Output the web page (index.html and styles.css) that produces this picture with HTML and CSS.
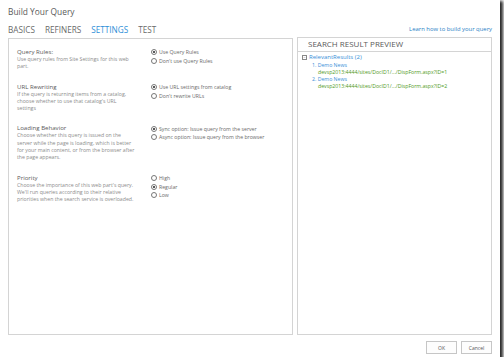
FILE: index.html
```html
<!DOCTYPE html>
<html>
<head>
  <title>Build Your Query</title>
  <link rel="stylesheet" href="styles.css">
</head>
<body>
<div class="dialog">
  <div class="dialog-title">Build Your Query</div>
  <div class="tab-row">
    <div class="tabs">
      <span class="tab">BASICS</span>
      <span class="tab">REFINERS</span>
      <span class="tab active">SETTINGS</span>
      <span class="tab">TEST</span>
    </div>
    <a class="help-link" href="#">Learn how to build your query</a>
  </div>

  <div class="panels">
    <div class="settings-panel">
      <div class="setting">
        <div class="setting-info">
          <div class="setting-name">Query Rules:</div>
          <div class="setting-desc">Use query rules from Site Settings for this web part.</div>
        </div>
        <div class="options">
          <div class="option"><span class="radio checked"></span>Use Query Rules</div>
          <div class="option"><span class="radio"></span>Don't use Query Rules</div>
        </div>
      </div>

      <div class="setting">
        <div class="setting-info">
          <div class="setting-name">URL Rewriting</div>
          <div class="setting-desc">If the query is returning items from a catalog, choose whether to use that catalog's URL settings</div>
        </div>
        <div class="options">
          <div class="option"><span class="radio checked"></span>Use URL settings from catalog</div>
          <div class="option"><span class="radio"></span>Don't rewrite URLs</div>
        </div>
      </div>

      <div class="setting">
        <div class="setting-info">
          <div class="setting-name">Loading Behavior</div>
          <div class="setting-desc">Choose whether this query is issued on the server while the page is loading, which is better for your main content, or from the browser after the page appears.</div>
        </div>
        <div class="options">
          <div class="option"><span class="radio checked"></span>Sync option: Issue query from the server</div>
          <div class="option"><span class="radio"></span>Async option: Issue query from the browser</div>
        </div>
      </div>

      <div class="setting">
        <div class="setting-info">
          <div class="setting-name">Priority</div>
          <div class="setting-desc">Choose the importance of this web part's query. We'll run queries according to their relative priorities when the search service is overloaded.</div>
        </div>
        <div class="options">
          <div class="option"><span class="radio"></span>High</div>
          <div class="option"><span class="radio checked"></span>Regular</div>
          <div class="option"><span class="radio"></span>Low</div>
        </div>
      </div>
    </div>

    <div class="preview-panel">
      <div class="preview-header">SEARCH RESULT PREVIEW</div>
      <div class="preview-body">
        <div class="tree-root"><span class="toggle">&minus;</span>RelevantResults (2)</div>
        <div class="result">
          <div class="result-title">1. Demo News</div>
          <div class="result-url">devsp2013:4444/sites/DocID1/.../DispForm.aspx?ID=1</div>
        </div>
        <div class="result">
          <div class="result-title">2. Demo News</div>
          <div class="result-url">devsp2013:4444/sites/DocID1/.../DispForm.aspx?ID=2</div>
        </div>
      </div>
    </div>
  </div>

  <div class="buttons">
    <button class="dlg-button">OK</button>
    <button class="dlg-button">Cancel</button>
  </div>
</div>
</body>
</html>
```

FILE: styles.css
```css
body {
  margin: 0;
  background-color: #ffffff;
  font-family: "Open Sans", Lato, sans-serif;
  color: #444;
}
.dialog {
  width: 500px;
  height: 357px;
  background-color: #ffffff;
  box-shadow: 2px 2px 3px 1px rgba(0, 0, 0, 0.85);
  box-sizing: border-box;
  padding: 0 8px 0 8px;
}
.dialog-title {
  padding-top: 6px;
  height: 14px;
  line-height: 12px;
  font-size: 8.4px;
  color: #5a5a5a;
}
.tab-row {
  display: flex;
  justify-content: space-between;
  align-items: center;
  height: 18px;
}
.tabs {
  display: flex;
  gap: 10px;
}
.tab {
  font-size: 8.2px;
  color: #6a6a6a;
}
.tab.active {
  color: #2f8fd8;
}
.help-link {
  font-size: 5.9px;
  color: #2a7fc6;
  text-decoration: none;
}
.panels {
  display: flex;
  gap: 4px;
  height: 297px;
}
.settings-panel {
  width: 285px;
  box-sizing: border-box;
  border: 1px solid #d4d4d4;
  padding: 9px 8px;
}
.setting {
  display: flex;
  margin-bottom: 12px;
}
.setting-info {
  width: 119px;
  margin-right: 15px;
}
.setting-name {
  font-size: 6.1px;
  line-height: 8px;
  color: #5a5a5a;
}
.setting-desc {
  font-size: 5.2px;
  line-height: 7.3px;
  color: #8c8c8c;
}
.options {
  flex: 1;
}
.option {
  display: flex;
  align-items: center;
  height: 9.3px;
  margin-top: -0.5px;
  font-size: 5.2px;
  color: #6a6a6a;
}
.radio {
  width: 4px;
  height: 4px;
  border: 0.8px solid #777;
  border-radius: 50%;
  margin-right: 2px;
  position: relative;
}
.radio.checked::after {
  content: "";
  position: absolute;
  left: 1px;
  top: 1px;
  width: 2px;
  height: 2px;
  border-radius: 50%;
  background-color: #222;
}
.preview-panel {
  width: 195px;
  box-sizing: border-box;
  border: 1px solid #d4d4d4;
  margin-top: -1px;
}
.preview-header {
  border-bottom: 1px solid #d4d4d4;
  height: 13px;
  line-height: 12px;
  padding-left: 10px;
  font-size: 8px;
  color: #5a5a5a;
}
.preview-body {
  padding: 2px 4px;
}
.tree-root {
  display: flex;
  align-items: center;
  font-size: 6px;
  line-height: 7.5px;
  color: #3a8fd8;
}
.toggle {
  width: 3px;
  height: 3px;
  border: 0.8px solid #888;
  font-size: 4px;
  line-height: 3px;
  text-align: center;
  color: #666;
  margin-right: 2px;
}
.result {
  padding-left: 10px;
}
.result-title {
  font-size: 5.2px;
  line-height: 7.3px;
  color: #3a8fd8;
}
.result-url {
  font-size: 5.2px;
  line-height: 7.3px;
  padding-left: 6px;
  color: #4f9a1c;
}
.buttons {
  display: flex;
  justify-content: flex-end;
  gap: 4px;
  margin-top: 6px;
}
.dlg-button {
  width: 31px;
  height: 13px;
  padding: 0;
  background-color: #fdfdfd;
  border: 1px solid #c6c6c6;
  font-family: "Open Sans", Lato, sans-serif;
  font-size: 5px;
  color: #555;
}
```
